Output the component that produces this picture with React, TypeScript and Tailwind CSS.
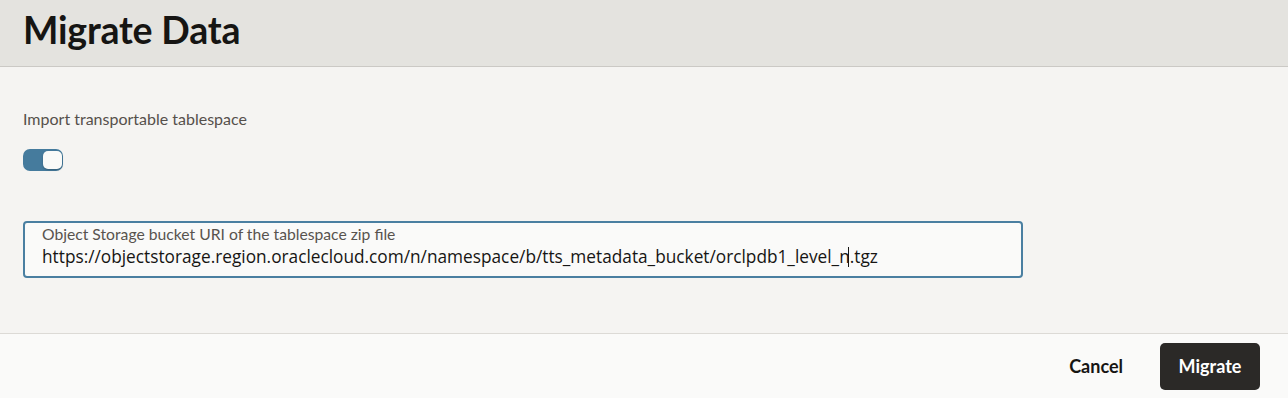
export default function App() {
  return (
    <div className="flex h-[398px] w-[1288px] flex-col bg-[#f5f4f2] font-['Lato','Noto_Sans',sans-serif]">
      <header className="flex h-[67px] shrink-0 items-center border-b border-[#cbc9c5] bg-[#e4e3df] pb-[6px] pl-[23px]">
        <h1 className="text-[37.5px] font-bold leading-none tracking-[-0.2px] text-[#161513]">Migrate Data</h1>
      </header>

      <main className="flex flex-1 flex-col px-[23px] pt-[42px]">
        <label className="text-[16px] leading-[20px] text-[#55504b]">Import transportable tablespace</label>

        <button
          type="button"
          className="mt-[20px] flex h-[22px] w-[40px] items-center justify-end rounded-[7px] bg-[#457b9d] pr-[1px]"
        >
          <span className="h-[18px] w-[19px] rounded-[5px] bg-[#fafaf8] shadow-[0_1px_2px_rgba(0,0,0,0.25)]" />
        </button>

        <div className="mt-[50px] flex h-[57px] w-[1000px] flex-col rounded-[4px] border-2 border-[#4a7fa1] bg-[#fafaf9] pl-[17px] pt-[2px]">
          <span className="text-[15.7px] leading-[19px] text-[#58534e]">Object Storage bucket URI of the tablespace zip file</span>
          <span className="mt-[1px] font-['Open_Sans','Noto_Sans',sans-serif] text-[17.25px] leading-[24px] text-[#161513]">
            https://objectstorage.region.oraclecloud.com/n/namespace/b/tts_metadata_bucket/orclpdb1_level_n
            <span className="relative">
              <span className="absolute -left-[2px] top-[2px] h-[20px] w-px bg-[#161513]" />
              .tgz
            </span>
          </span>
        </div>
      </main>

      <footer className="flex h-[65px] shrink-0 items-center justify-end gap-[37px] border-t border-[#dcdad6] bg-[#fafaf9] pr-[28px]">
        <button type="button" className="text-[18px] font-bold text-[#161513]">Cancel</button>
        <button
          type="button"
          className="h-[47px] w-[100px] rounded-[5px] bg-[#2b2927] text-[18px] font-bold text-white"
        >
          Migrate
        </button>
      </footer>
    </div>
  );
}
